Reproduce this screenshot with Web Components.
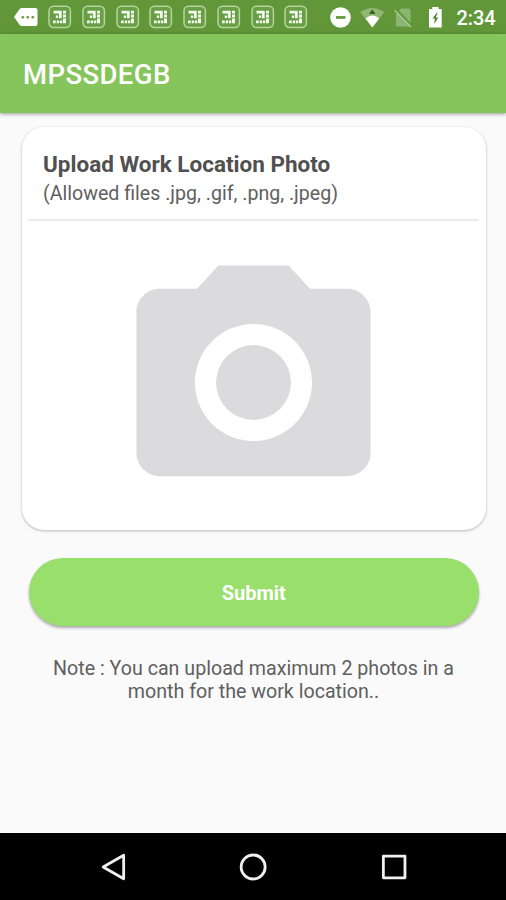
<!DOCTYPE html>
<html lang="en">
<head>
<meta charset="utf-8">
<title>MPSSDEGB</title>
<style>
html, body { margin: 0; height: 100%; }
body { font-family: Roboto, "Liberation Sans", sans-serif; overflow: hidden; }
</style>
</head>
<body>
<upload-screen></upload-screen>
<script>
function define(name, html) {
  const template = document.createElement('template');
  template.innerHTML = html;
  customElements.define(name, class extends HTMLElement {
    constructor() {
      super();
      this.attachShadow({ mode: 'open' }).append(template.content.cloneNode(true));
    }
  });
}

define('grid-notification', `
<style>:host{display:block;flex:none;width:33.75px;height:24px}svg{display:block}</style>
<svg width="24" height="24" viewBox="0 0 24 24">
  <rect x="1" y="1.2" width="21.4" height="21.4" rx="4.5" fill="#689f46" stroke="#b5d59c" stroke-width="1.5"/>
  <g fill="#f4f9ee">
    <path d="M5.500 5.800h8.200v2.600H5.500zM15 5.800h3v2.800h-3zM11 8.400h2.700v4.800H11zM15 9.600h3v3h-3zM7.800 10.400h2.400v2.600H7.800z"/>
    <path d="M5 15.400h2.700v2.800H5zM8.700 15.400h2.500v2.800H8.700zM12 15.400h2.300v2.800H12zM15 13.600h3v4.600h-3z"/>
  </g>
</svg>`);

define('status-bar', `
<style>
:host{display:flex;flex:none;height:34px;box-sizing:border-box;background:#619739;color:#fff;align-items:center;padding-left:14px}
svg{display:block;flex:none}
.notes{display:flex;width:316px;align-items:center}
.tag{width:34px}
time{font-size:20px;font-weight:500;line-height:24px;margin:2px 0 0 12.500px;letter-spacing:-.1px}
</style>
<div class="notes">
  <svg class="tag" width="34" height="24" viewBox="0 0 34 24"><path d="M0 12 5.500 4.300Q6.500 3 8 3h13.500q2 0 2 2v14q0 2-2 2H8q-1.500 0-2.500-1.300z" fill="#fff"/><g fill="#619739"><circle cx="8.800" cy="12.200" r="1.300"/><circle cx="13.800" cy="12.200" r="1.300"/><circle cx="18.800" cy="12.200" r="1.300"/></g></svg>
  <grid-notification></grid-notification><grid-notification></grid-notification><grid-notification></grid-notification><grid-notification></grid-notification><grid-notification></grid-notification><grid-notification></grid-notification><grid-notification></grid-notification><grid-notification></grid-notification>
</div>
<svg width="114" height="34" viewBox="330 0 114 34">
  <circle cx="340.500" cy="17.500" r="10.300" fill="#fff"/><path d="M336 16.100h9.500v2.700H336z" fill="#619739"/>
  <path d="M360.300 12.200Q372.200 3.800 384.200 12.200L372.300 27.500z" fill="#90b775"/>
  <path d="M365.500 18.500Q372.300 12.500 379.200 18.500L372.300 27.500z" fill="#fff"/>
  <path d="M372.300 9.500l3.200 4.600h-6.400z" fill="#34611e"/>
  <path d="M396 13.500l5-5h7.500q2 0 2 2v16H396z" fill="#8cb572"/>
  <path d="M396.500 9.800L412 26" stroke="#619739" stroke-width="2.500"/>
  <path d="M394.500 10.300L411 27" stroke="#a5c790" stroke-width="1.600"/>
  <path d="M429 9h3.300V7h6.200v2h3.200v18.500H429z" fill="#fff"/>
  <path d="M437 12.500l-4.500 6h2.400l-.8 5.500 4.200-6.500h-2.600l2-5z" fill="#4a832b"/>
</svg>
<time>2:34</time>`);

define('app-bar', `
<style>
:host{display:flex;flex:none;height:78.5px;box-sizing:border-box;padding:3px 0 0 23px;align-items:center;background:#86c55c;box-shadow:0 1px 4px rgba(0,0,0,.4);position:relative}
h1{margin:0;color:#fff;font-size:27.500px;font-weight:500;line-height:32px;letter-spacing:.4px}
</style>
<h1><slot></slot></h1>`);

define('photo-card', `
<style>
:host{display:flex;flex-direction:column;height:402.500px;margin:0 20px 0 22px;box-sizing:border-box;background:#fff;border-radius:22px;box-shadow:0 1px 3px rgba(0,0,0,.28)}
header{padding:23px 21px 0;height:91.500px;box-sizing:border-box;color:#505050}
h2{font-size:22.500px;font-weight:700;line-height:28px;margin:0}
p{font-size:19.600px;line-height:28px;margin:2px 0 0;color:#606060}
h2,p{white-space:nowrap}
hr{border:0;background:#ebebeb;height:2px;margin:0 7px 0 6px;flex:none}
svg{display:block;margin:21.500px 0 0 91px;flex:none}
</style>
<header><h2><slot name="title"></slot></h2><p><slot name="hint"></slot></p></header>
<hr>
<svg width="281" height="281" viewBox="0 0 24 24" fill="#dbdbdd"><circle cx="12" cy="12" r="3.200"/><path d="M9 2L7.170 4H4c-1.100 0-2 .9-2 2v12c0 1.100.9 2 2 2h16c1.100 0 2-.9 2-2V6c0-1.100-.9-2-2-2h-3.170L15 2H9zm3 15c-2.760 0-5-2.240-5-5s2.240-5 5-5 5 2.240 5 5-2.240 5-5 5z"/></svg>`);

define('submit-button', `
<style>
:host{display:block;margin:28.500px 27px 0 28.500px}
button{display:block;width:100%;height:68px;border:0;padding:1px 0 0;border-radius:34px;background:#99df6b;color:#fff;font:700 20px/24px Roboto,sans-serif;box-shadow:0 2px 3px rgba(0,0,0,.33)}
</style>
<button><slot></slot></button>`);

define('upload-note', `
<style>:host{display:block;margin:31px 0 0 1px;text-align:center;color:#606060;font-size:19.650px;line-height:23px;white-space:nowrap}</style>
<slot></slot>`);

define('nav-bar', `
<style>
:host{display:flex;flex:none;height:67px;background:#000;align-items:center;padding:0 42px 0 43px;box-sizing:border-box}
svg{flex:1;height:34px;min-width:0}
path,circle,rect{fill:none;stroke:#f0f0f0;stroke-width:2.800;stroke-linejoin:round}
</style>
<svg viewBox="-17 -17 34 34"><path d="M-10 0L10.500 -11.800V11.800z"/></svg>
<svg viewBox="-17 -17 34 34"><circle r="12"/></svg>
<svg viewBox="-17 -17 34 34"><rect x="-10.800" y="-10.800" width="21.600" height="21.600"/></svg>`);

define('upload-screen', `
<style>
:host{display:flex;flex-direction:column;width:506px;height:900px;background:#fafafa}
main{flex:1;padding-top:14.500px}
</style>
<status-bar></status-bar>
<app-bar>MPSSDEGB</app-bar>
<main>
  <photo-card><span slot="title">Upload Work Location Photo</span><span slot="hint">(Allowed files .jpg, .gif, .png, .jpeg)</span></photo-card>
  <submit-button>Submit</submit-button>
  <upload-note>Note : You can upload maximum 2 photos in a<br>month for the work location..</upload-note>
</main>
<nav-bar></nav-bar>`);
</script>
</body>
</html>
